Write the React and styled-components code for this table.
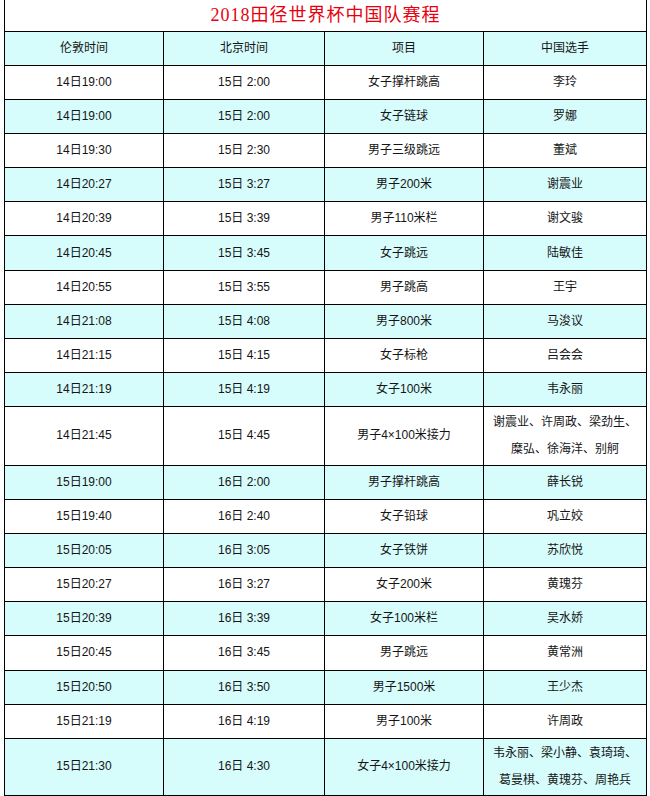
import React from "react";
import styled, { createGlobalStyle } from "styled-components";

const Global = createGlobalStyle`
  html, body { margin: 0; padding: 0; background: #fff; }
  body { font-family: "Liberation Sans", "Noto Sans CJK SC", sans-serif; }
`;

const Page = styled.div`
  padding: 0 0 0 4px;
  width: 650px;
  box-sizing: border-box;
`;

const Table = styled.table`
  border-collapse: collapse;
  table-layout: fixed;
  width: 642px;
  font-size: 12px;
  color: #151515;
`;

const TitleCell = styled.td`
  height: 29px;
  padding: 0 0 2px 0;
  border-left: 1.5px solid #000;
  border-right: 1.5px solid #000;
  text-align: center;
  vertical-align: middle;
  color: #e8000f;
  font-family: "Liberation Serif", "Noto Sans CJK SC", serif;
  font-size: 18px;
  letter-spacing: 1px;
  line-height: 20px;
`;

const Row = styled.tr`
  height: ${(p) => p.$h}px;
  background: ${(p) => (p.$shade ? "#d6fcfc" : "#ffffff")};
`;

const Cell = styled.td`
  border: 1.5px solid #000;
  padding: 0;
  text-align: center;
  vertical-align: middle;
  line-height: 27px;
  white-space: nowrap;
`;

const data = [
  ["14日19:00", "15日 2:00", "女子撑杆跳高", "李玲"],
  ["14日19:00", "15日 2:00", "女子链球", "罗娜"],
  ["14日19:30", "15日 2:30", "男子三级跳远", "董斌"],
  ["14日20:27", "15日 3:27", "男子200米", "谢震业"],
  ["14日20:39", "15日 3:39", "男子110米栏", "谢文骏"],
  ["14日20:45", "15日 3:45", "女子跳远", "陆敏佳"],
  ["14日20:55", "15日 3:55", "男子跳高", "王宇"],
  ["14日21:08", "15日 4:08", "男子800米", "马浚议"],
  ["14日21:15", "15日 4:15", "女子标枪", "吕会会"],
  ["14日21:19", "15日 4:19", "女子100米", "韦永丽"],
  ["14日21:45", "15日 4:45", "男子4×100米接力", ["谢震业、许周政、梁劲生、", "糜弘、徐海洋、别舸"], 59],
  ["15日19:00", "16日 2:00", "男子撑杆跳高", "薛长锐"],
  ["15日19:40", "16日 2:40", "女子铅球", "巩立姣"],
  ["15日20:05", "16日 3:05", "女子铁饼", "苏欣悦"],
  ["15日20:27", "16日 3:27", "女子200米", "黄瑰芬"],
  ["15日20:39", "16日 3:39", "女子100米栏", "吴水娇"],
  ["15日20:45", "16日 3:45", "男子跳远", "黄常洲"],
  ["15日20:50", "16日 3:50", "男子1500米", "王少杰"],
  ["15日21:19", "16日 4:19", "男子100米", "许周政"],
  ["15日21:30", "16日 4:30", "女子4×100米接力", ["韦永丽、梁小静、袁琦琦、", "葛曼棋、黄瑰芬、周艳兵"], 57],
];

export default function App() {
  return (
    <Page>
      <Global />
      <Table>
        <colgroup>
          <col style={{ width: 159 }} />
          <col style={{ width: 161 }} />
          <col style={{ width: 159 }} />
          <col style={{ width: 163 }} />
        </colgroup>
        <tbody>
          <tr>
            <TitleCell colSpan={4}>2018田径世界杯中国队赛程</TitleCell>
          </tr>
          <Row $h={34} $shade>
            <Cell>伦敦时间</Cell>
            <Cell>北京时间</Cell>
            <Cell>项目</Cell>
            <Cell>中国选手</Cell>
          </Row>
          {data.map((r, i) => {
            const tall = Array.isArray(r[3]);
            return (
              <Row key={i} $shade={i % 2 === 1} $h={r[4] || 34.1}>
                <Cell>{r[0]}</Cell>
                <Cell>{r[1]}</Cell>
                <Cell>{r[2]}</Cell>
                <Cell>
                  {tall ? (
                    <>
                      {r[3][0]}
                      <br />
                      {r[3][1]}
                    </>
                  ) : (
                    r[3]
                  )}
                </Cell>
              </Row>
            );
          })}
        </tbody>
      </Table>
    </Page>
  );
}
